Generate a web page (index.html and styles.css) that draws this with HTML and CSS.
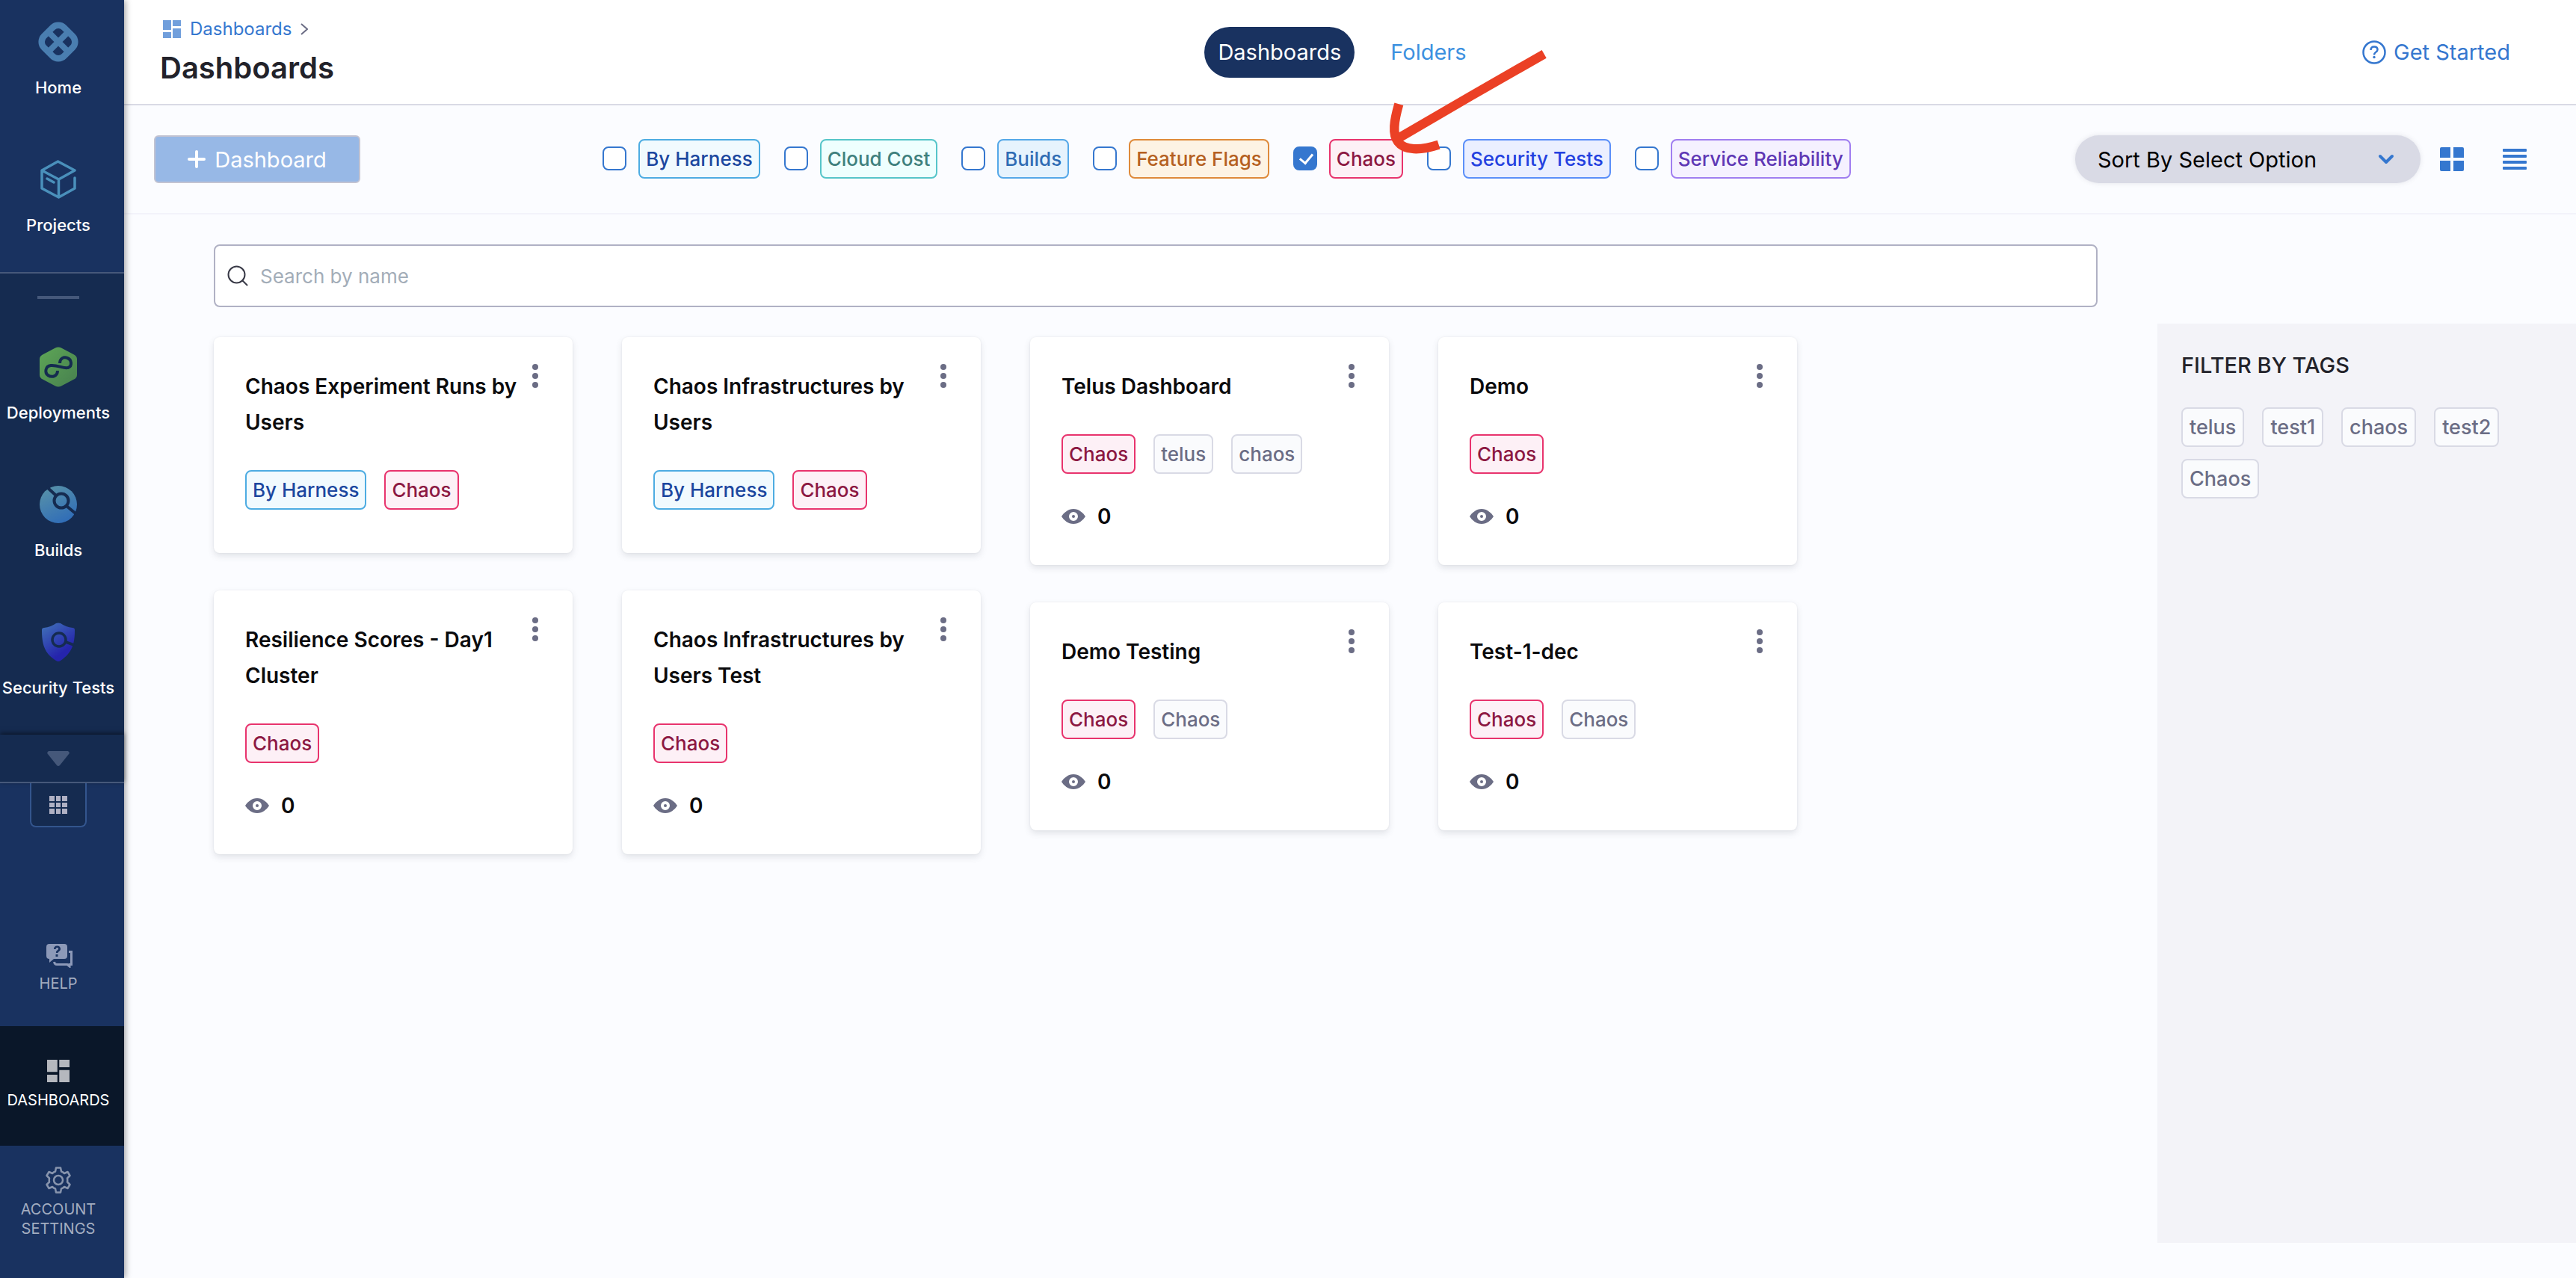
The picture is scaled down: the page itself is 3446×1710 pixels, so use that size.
FILE: index.html
```
<!DOCTYPE html>
<html lang="en">
<head>
<meta charset="utf-8">
<meta name="viewport" content="width=device-width, initial-scale=1">
<title>Dashboards</title>
<link rel="stylesheet" href="styles.css">
</head>
<body>
<svg class="sprite" aria-hidden="true">
  <symbol id="i-dash" viewBox="0 0 24 24"><path d="M0 0h11v13H0zM0 16h11v8H0zM13 0h11v8H13zM13 11h11v13H13z"/></symbol>
  <symbol id="i-dots" viewBox="0 0 8 32"><circle cx="4" cy="4" r="4"/><circle cx="4" cy="16" r="4"/><circle cx="4" cy="28" r="4"/></symbol>
  <symbol id="i-eye" viewBox="0 0 32 20"><path fill-rule="evenodd" d="M16 0C23 0 29 5 32 10C29 15 23 20 16 20S3 15 0 10C3 5 9 0 16 0ZM16 4a6 6 0 1 0 0 12a6 6 0 1 0 0-12Z"/><circle cx="16" cy="10" r="2"/></symbol>
</svg>

<div class="app">
  <nav class="sidebar" aria-label="Main">
    <div class="side-top">
      <a class="module" href="#">
        <span class="module-icon"><svg width="60" height="60" viewBox="0 0 60 60" fill="none" stroke="#4a7eb0"><rect x="11" y="11" width="38" height="38" rx="11" stroke-width="8.500" transform="rotate(45 30 30)"/><path d="M17 17l26 26M43 17L17 43" stroke-width="8"/></svg></span>
        Home
      </a>
      <a class="module" href="#">
        <span class="module-icon"><svg width="48" height="52" viewBox="0 0 48 52" fill="none" stroke="#4a90bb" stroke-width="3.500" stroke-linejoin="round" stroke-linecap="round"><path d="M46 24v14L24.500 50L2 38V14L23.500 2L46 14L24.500 26V50M2 14L24.500 26M9 25l9 5"/></svg></span>
        Projects
      </a>
    </div>
    <div class="side-modules">
      <span class="side-bar"></span>
      <a class="module" href="#">
        <span class="module-icon"><svg width="50" height="54" viewBox="0 0 50 54"><defs><linearGradient id="g1" x1="0" y1="0" x2="1" y2="1"><stop offset="0" stop-color="#5ea656"/><stop offset="1" stop-color="#47804f"/></linearGradient></defs><path fill="url(#g1)" d="M21 1.500q4-2 8 0l17 9q4 2 4 6v21q0 4-4 6l-17 9q-4 2-8 0l-17-9q-4-2-4-6v-21q0-4 4-6z"/><path fill="none" stroke="#152b50" stroke-width="4" d="M27 22C27 15 33 13 37 15C43 17 44 26 38 28C33 30 24 24 15 25C7 26 7 35 11 38C17 42 24 39 24 32"/></svg></span>
        Deployments
      </a>
      <a class="module" href="#">
        <span class="module-icon"><svg width="50" height="50" viewBox="0 0 50 50"><defs><linearGradient id="g2" x1="0.200" y1="0" x2="0.700" y2="1"><stop offset="0" stop-color="#5892a8"/><stop offset="1" stop-color="#2f6cb8"/></linearGradient></defs><circle cx="25" cy="25" r="25" fill="url(#g2)"/><g fill="none" stroke="#152b50" stroke-width="4"><circle cx="29" cy="20" r="9.500"/><path d="M22 13L10 2M36 27l12 10"/></g></svg></span>
        Builds
      </a>
      <a class="module" href="#">
        <span class="module-icon"><svg width="46" height="52" viewBox="0 0 46 52"><defs><linearGradient id="g3" x1="0.100" y1="0" x2="0.700" y2="1"><stop offset="0" stop-color="#4070b8"/><stop offset="0.800" stop-color="#2524ac"/></linearGradient></defs><path fill="url(#g3)" d="M20 1q3-1 6 0q7 5 16 6q3 0 3 3C45 28 42 40 26 51q-3 2-6 0C4 41 1 28 1 10q0-3 3-3q9-1 16-6z"/><g fill="none" stroke="#152b50" stroke-width="3.500"><circle cx="24" cy="23" r="9"/><path d="M33 26l11 4"/></g></svg></span>
        Security Tests
      </a>
    </div>
    <button class="side-more" aria-label="More modules"><svg width="30" height="20" viewBox="0 0 30 20"><path fill="#45587a" d="M2 0h26q3 2 1 4L17 19q-2 2-4 0L1 4q-2-2 1-4z"/></svg></button>
    <button class="side-grid" aria-label="All modules"><svg width="24" height="24" viewBox="0 0 24 24" fill="#b0b1c4"><path d="M0 0h7v7H0zM9 0h6v7H9zM17 0h7v7h-7zM0 9h7v6H0zM9 9h6v6H9zM17 9h7v6h-7zM0 17h7v7H0zM9 17h6v7H9zM17 17h7v7h-7z"/></svg></button>
    <a class="side-link side-help" href="#">
      <span class="side-link-icon"><svg width="36" height="32" viewBox="0 0 36 32" fill="#8c99b8"><path fill-rule="evenodd" d="M4 0h20q4 0 4 4v12q0 4-4 4H10l-6 5v-5q-4 0-4-4V4q0-4 4-4zM10 7h2.500q0-2 2-2q2 0 1.500 2q-.500 1-2 2q-1.500 1-1 3h2.500q0-1 1.500-2q2-1 2-3.500q-.500-4-4.500-4q-4.500 0-4.500 4.500zM12.500 14v3h3v-3z"/><path fill="none" stroke="#8c99b8" stroke-width="3" d="M30 10.500h3.500V27.500H31V30L28 27.500H14q-3 0-3.500-3.500"/></svg></span>
      HELP
    </a>
    <a class="side-link side-current" href="#" aria-current="page">
      <span class="side-link-icon"><svg width="30" height="30" fill="#b5b8be"><use href="#i-dash"/></svg></span>
      DASHBOARDS
    </a>
    <a class="side-link side-account" href="#">
      <span class="side-link-icon"><svg width="34" height="36" viewBox="0 0 34 36" fill="none" stroke="#8794ad" stroke-width="2.500" stroke-linejoin="round"><circle cx="17" cy="18" r="6"/><path d="M14 1.500h6l1 5q2 .500 4 2.500l4.500-2l3 5l-3.500 3.500q.500 2.500 0 5l3.500 3.500l-3 5l-4.500-2q-2 2-4 2.500l-1 5h-6l-1-5q-2-.500-4-2.500l-4.500 2l-3-5L5 20.500q-.500-2.500 0-5L1.500 12l3-5L9 9q2-2 4-2.500z"/></svg></span>
      <span>ACCOUNT<br>SETTINGS</span>
    </a>
  </nav>

  <main class="main">
    <header class="header">
      <div class="heading">
        <div class="crumbs">
          <svg class="crumb-icon" width="24" height="24" fill="#719fdc" aria-hidden="true"><use href="#i-dash"/></svg>
          <a class="crumb" href="#">Dashboards</a>
          <svg width="10" height="16" viewBox="0 0 10 16" fill="none" stroke="#6b6d85" stroke-width="2" aria-hidden="true"><path d="M1 1l8 7l-8 7"/></svg>
        </div>
        <h1 class="title">Dashboards</h1>
      </div>
      <nav class="tabs" aria-label="Views">
        <a class="tab tab-active" href="#">Dashboards</a>
        <a class="tab" href="#">Folders</a>
      </nav>
      <a class="get-started" href="#">
        <svg width="32" height="32" viewBox="0 0 32 32" fill="none" stroke="#3577cf" aria-hidden="true"><circle cx="16" cy="16" r="14.500" stroke-width="2.500"/><path stroke-width="2.500" d="M11.500 13q0-4.500 4.500-4.500t4.500 4q0 2-2.500 3.500q-2 1.200-2 3.500"/><circle cx="16" cy="22.500" r="1.700" fill="#3577cf" stroke="none"/></svg>
        Get Started
      </a>
    </header>

    <div class="toolbar">
      <button class="add"><svg width="24" height="24" viewBox="0 0 24 24" stroke="#fff" stroke-width="4" stroke-linecap="round" aria-hidden="true"><path d="M12 2v20M2 12h20"/></svg>Dashboard</button>
      <div class="filters">
        <label class="filter"><input class="check" type="checkbox"><span class="tag tag-harness">By Harness</span></label>
        <label class="filter"><input class="check" type="checkbox"><span class="tag tag-cost">Cloud Cost</span></label>
        <label class="filter"><input class="check" type="checkbox"><span class="tag tag-builds">Builds</span></label>
        <label class="filter"><input class="check" type="checkbox"><span class="tag tag-flags">Feature Flags</span></label>
        <label class="filter"><input class="check" type="checkbox" checked><span class="tag tag-chaos">Chaos</span>
          <svg class="arrow" width="240" height="170" viewBox="0 0 720 510" fill="none" stroke="#eb4025" stroke-width="37" aria-hidden="true"><path d="M677 64L380 234L95 400"/><path d="M94 265C75 330 66 385 90 416C116 452 180 452 254 428"/></svg>
        </label>
        <label class="filter"><input class="check" type="checkbox"><span class="tag tag-security">Security Tests</span></label>
        <label class="filter"><input class="check" type="checkbox"><span class="tag tag-reliability">Service Reliability</span></label>
      </div>
      <div class="view">
        <div class="sort">
          <select class="sort-select" aria-label="Sort by"><option>Sort By Select Option</option></select>
          <svg class="sort-caret" width="22" height="14" viewBox="0 0 22 14" fill="none" stroke="#3577cf" stroke-width="4" stroke-linecap="round" stroke-linejoin="round" aria-hidden="true"><path d="M3 3l8 8l8-8"/></svg>
        </div>
        <button class="icon-button" aria-label="Grid view"><svg width="32" height="32" viewBox="0 0 32 32" fill="#3577cf"><path d="M2 0h12v14H0V2q0-2 2-2zM18 0h12q2 0 2 2v12H18zM0 18h14v14H2q-2 0-2-2zM18 18h14v12q0 2-2 2H18z"/></svg></button>
        <button class="icon-button" aria-label="List view"><svg width="32" height="28" viewBox="0 0 32 28" fill="#3577cf"><rect width="32" height="4" rx="1"/><rect y="8" width="32" height="4" rx="1"/><rect y="16" width="32" height="4" rx="1"/><rect y="24" width="32" height="4" rx="1"/></svg></button>
      </div>
    </div>

    <div class="body">
      <div class="content">
        <label class="search">
          <svg width="28" height="28" viewBox="0 0 28 28" fill="none" stroke="#383946" stroke-width="2" stroke-linecap="round" aria-hidden="true"><circle cx="12.500" cy="12.500" r="11"/><path d="M20.500 20.500l6 6"/></svg>
          <input class="search-input" type="search" placeholder="Search by name" aria-label="Search by name">
        </label>

        <div class="columns">
          <div class="column">
            <article class="card">
              <div class="card-head"><h2 class="card-title">Chaos Experiment Runs by Users</h2><button class="menu" aria-label="Options"><svg width="8" height="32"><use href="#i-dots"/></svg></button></div>
              <div class="tags"><span class="tag tag-harness">By Harness</span><span class="tag tag-chaos">Chaos</span></div>
            </article>
            <article class="card">
              <div class="card-head"><h2 class="card-title">Resilience Scores - Day1 Cluster</h2><button class="menu" aria-label="Options"><svg width="8" height="32"><use href="#i-dots"/></svg></button></div>
              <div class="tags"><span class="tag tag-chaos">Chaos</span></div>
              <div class="views"><svg width="32" height="20"><use href="#i-eye"/></svg>0</div>
            </article>
          </div>
          <div class="column">
            <article class="card">
              <div class="card-head"><h2 class="card-title">Chaos Infrastructures by Users</h2><button class="menu" aria-label="Options"><svg width="8" height="32"><use href="#i-dots"/></svg></button></div>
              <div class="tags"><span class="tag tag-harness">By Harness</span><span class="tag tag-chaos">Chaos</span></div>
            </article>
            <article class="card">
              <div class="card-head"><h2 class="card-title">Chaos Infrastructures by Users Test</h2><button class="menu" aria-label="Options"><svg width="8" height="32"><use href="#i-dots"/></svg></button></div>
              <div class="tags"><span class="tag tag-chaos">Chaos</span></div>
              <div class="views"><svg width="32" height="20"><use href="#i-eye"/></svg>0</div>
            </article>
          </div>
          <div class="column">
            <article class="card">
              <div class="card-head"><h2 class="card-title">Telus Dashboard</h2><button class="menu" aria-label="Options"><svg width="8" height="32"><use href="#i-dots"/></svg></button></div>
              <div class="tags"><span class="tag tag-chaos">Chaos</span><span class="tag">telus</span><span class="tag">chaos</span></div>
              <div class="views"><svg width="32" height="20"><use href="#i-eye"/></svg>0</div>
            </article>
            <article class="card">
              <div class="card-head"><h2 class="card-title">Demo Testing</h2><button class="menu" aria-label="Options"><svg width="8" height="32"><use href="#i-dots"/></svg></button></div>
              <div class="tags"><span class="tag tag-chaos">Chaos</span><span class="tag">Chaos</span></div>
              <div class="views"><svg width="32" height="20"><use href="#i-eye"/></svg>0</div>
            </article>
          </div>
          <div class="column">
            <article class="card">
              <div class="card-head"><h2 class="card-title">Demo</h2><button class="menu" aria-label="Options"><svg width="8" height="32"><use href="#i-dots"/></svg></button></div>
              <div class="tags"><span class="tag tag-chaos">Chaos</span></div>
              <div class="views"><svg width="32" height="20"><use href="#i-eye"/></svg>0</div>
            </article>
            <article class="card">
              <div class="card-head"><h2 class="card-title">Test-1-dec</h2><button class="menu" aria-label="Options"><svg width="8" height="32"><use href="#i-dots"/></svg></button></div>
              <div class="tags"><span class="tag tag-chaos">Chaos</span><span class="tag">Chaos</span></div>
              <div class="views"><svg width="32" height="20"><use href="#i-eye"/></svg>0</div>
            </article>
          </div>
        </div>
      </div>

      <aside class="panel">
        <h2 class="panel-title">FILTER BY TAGS</h2>
        <div class="panel-tags"><button class="tag panel-tag">telus</button><button class="tag panel-tag">test1</button><button class="tag panel-tag">chaos</button><button class="tag panel-tag">test2</button><button class="tag panel-tag">Chaos</button></div>
      </aside>
    </div>
  </main>
</div>
</body>
</html>
```
FILE: styles.css
```
* {
  box-sizing: border-box;
}

body {
  margin: 0;
  font-family: Inter, "Liberation Sans", sans-serif;
  font-size: 28px;
  color: #0b0b0d;
  background: #fbfcff;
}

a {
  text-decoration: none;
}

button {
  font: inherit;
  padding: 0;
  border: 0;
  background: none;
}

h1,
h2 {
  margin: 0;
}

svg {
  flex: none;
}

.sprite {
  position: absolute;
  width: 0;
  height: 0;
}

.app {
  display: flex;
  min-height: 100vh;
}

/* Sidebar */

.sidebar {
  position: relative;
  z-index: 1;
  display: flex;
  flex: none;
  flex-direction: column;
  width: 166px;
  background: #193260;
  box-shadow: 2px 0 8px rgba(0, 0, 0, 0.35);
}

.side-top,
.side-modules {
  display: flex;
  flex-direction: column;
  gap: 4px;
}

.side-top {
  border-bottom: 2px solid #46587a;
}

.side-modules {
  background: #152b50;
}

.side-bar {
  width: 56px;
  height: 4px;
  margin: 30px 0 31px 50px;
  background: #45587a;
}

.module {
  display: flex;
  flex-direction: column;
  align-items: center;
  gap: 18px;
  padding: 26px 10px 50px 0;
  font-size: 22px;
  font-weight: 500;
  line-height: 26px;
  white-space: nowrap;
  color: #fff;
}

.module-icon {
  display: flex;
  align-items: center;
  height: 60px;
}

.side-more {
  display: flex;
  align-items: center;
  justify-content: center;
  height: 65px;
  padding-right: 10px;
  background: #152b50;
  border-bottom: 2px solid #46587a;
  box-shadow: 0 -2px 6px rgba(0, 0, 0, 0.5);
}

.side-grid {
  display: flex;
  align-items: center;
  justify-content: center;
  width: 76px;
  height: 59px;
  margin-left: 40px;
  background: #152b50;
  border: 2px solid #33558d;
  border-top: 0;
  border-radius: 0 0 8px 8px;
}

.side-link {
  display: flex;
  flex-direction: column;
  align-items: center;
  gap: 8px;
  height: 160px;
  padding-right: 10px;
  font-size: 20px;
  line-height: 26px;
  text-align: center;
  color: #a3adc0;
}

.side-link-icon {
  display: flex;
  align-items: center;
  height: 36px;
}

.side-help {
  gap: 6px;
  margin-top: auto;
  padding-top: 48px;
}

.side-help .side-link-icon {
  padding-left: 4px;
}

.side-current {
  padding-top: 42px;
  color: #fff;
  background: #0a1729;
}

.side-account {
  height: 177px;
  padding-top: 28px;
}

/* Header */

.main {
  display: flex;
  flex: 1;
  flex-direction: column;
  min-width: 0;
}

.header {
  display: flex;
  align-items: center;
  justify-content: space-between;
  height: 141px;
  padding: 0 88px 0 48px;
  background: #fff;
  border-bottom: 2px solid #d9dae5;
}

.crumbs {
  display: flex;
  align-items: center;
  gap: 12px;
  height: 30px;
  padding-left: 4px;
}

.crumb {
  font-size: 24px;
  line-height: 30px;
  color: #3577cf;
}

.title {
  margin-top: 13px;
  font-size: 40px;
  font-weight: 600;
  line-height: 48px;
  color: #22222a;
}

.tabs {
  display: flex;
  gap: 30px;
  padding-right: 16px;
}

.tab {
  padding: 16px 18px;
  border-radius: 34px;
  font-size: 29px;
  line-height: 36px;
  color: #3d91e0;
}

.tab-active {
  color: #fff;
  background: #193260;
}

.get-started {
  display: flex;
  align-items: center;
  gap: 10px;
  font-size: 29px;
  color: #3577cf;
}

/* Toolbar */

.toolbar {
  display: flex;
  align-items: center;
  justify-content: space-between;
  height: 146px;
  padding: 0 66px 0 40px;
  border-bottom: 2px solid #f3f3fa;
}

.add {
  display: flex;
  align-items: center;
  justify-content: center;
  gap: 12px;
  width: 276px;
  height: 64px;
  font-size: 29px;
  color: #fff;
  background: #97b8e6;
  border: 2px solid #c2c3d2;
  border-radius: 6px;
}

.filters {
  display: flex;
  gap: 32px;
  padding: 0 0 2px 24px;
}

.filter {
  position: relative;
  display: flex;
  align-items: center;
  gap: 16px;
}

.check {
  position: relative;
  width: 32px;
  height: 32px;
  margin: 0;
  appearance: none;
  background: #fff;
  border: 2px solid #3577cf;
  border-radius: 8px;
}

.check:checked {
  background: #3577cf;
}

.check:checked::after {
  content: "";
  position: absolute;
  top: 4px;
  left: 10px;
  width: 8px;
  height: 14px;
  border: solid #fff;
  border-width: 0 3px 3px 0;
  transform: rotate(40deg);
}

.arrow {
  position: absolute;
  z-index: 1;
  top: -135px;
  left: 110px;
  pointer-events: none;
}

.view {
  display: flex;
  align-items: center;
}

.sort {
  position: relative;
  width: 462px;
}

.sort-select {
  width: 100%;
  height: 64px;
  padding: 0 60px 0 30px;
  appearance: none;
  font-family: inherit;
  font-size: 29px;
  color: #000;
  background: #d9dae5;
  border: 0;
  border-radius: 32px;
  box-shadow: 0 0 6px rgba(96, 97, 112, 0.15);
}

.sort-caret {
  position: absolute;
  top: 25px;
  right: 35px;
  pointer-events: none;
}

.icon-button {
  display: flex;
  margin-left: 26px;
}

.icon-button + .icon-button {
  margin-left: 52px;
}

/* Tags */

.tag {
  padding: 0 8px;
  border: 2px solid #d9dae5;
  border-radius: 8px;
  font-size: 26px;
  font-weight: 500;
  line-height: 49px;
  white-space: nowrap;
  color: #6b6d85;
  background: #fafbfd;
}

.tag-harness {
  color: #1c479f;
  background: #f1fafe;
  border-color: #4dace2;
}

.tag-cost {
  color: #3f807d;
  background: #eefffe;
  border-color: #56c5c9;
}

.tag-builds {
  color: #2f6cb4;
  background: #e6f3fd;
  border-color: #55a8e8;
}

.tag-flags {
  color: #b5601f;
  background: #fdf3e4;
  border-color: #df8a3a;
}

.tag-chaos {
  color: #8c1842;
  background: #fdf0f6;
  border-color: #e8336d;
}

.tag-security {
  color: #2441e0;
  background: #ebefff;
  border-color: #5b8ff9;
}

.tag-reliability {
  color: #5f38b5;
  background: #f5f1ff;
  border-color: #a07ef0;
}

/* Body */

.body {
  display: grid;
  flex: 1;
  grid-template-columns: minmax(0, 1fr) 560px;
}

.content {
  padding: 40px 80px 40px 120px;
}

.search {
  display: flex;
  align-items: center;
  gap: 16px;
  height: 84px;
  padding: 0 16px;
  background: #fff;
  border: 2px solid #b0b1c4;
  border-radius: 8px;
}

.search-input {
  flex: 1;
  height: 60px;
  padding: 0;
  border: 0;
  outline: 0;
  font-family: inherit;
  font-size: 26px;
  background: none;
}

.search-input::placeholder {
  color: #a3adb8;
  opacity: 1;
}

.columns {
  display: grid;
  grid-template-columns: repeat(4, minmax(0, 480px));
  gap: 66px;
  margin-top: 40px;
}

.column {
  display: flex;
  flex-direction: column;
  gap: 50px;
}

.card {
  padding: 36px 34px 48px 42px;
  background: #fff;
  border-radius: 8px;
  box-shadow: 0 4px 8px rgba(96, 97, 112, 0.16), 0 0 2px rgba(40, 41, 61, 0.08);
}

.card-head {
  display: flex;
  align-items: flex-start;
}

.card-title {
  flex: 1;
  padding-top: 6px;
  font-size: 28px;
  font-weight: 600;
  line-height: 48px;
}

.menu {
  display: flex;
  justify-content: center;
  width: 32px;
  fill: #6b6d85;
}

.tags {
  display: flex;
  flex-wrap: wrap;
  gap: 16px 24px;
  margin-top: 40px;
  padding-bottom: 10px;
}

.views {
  display: flex;
  align-items: center;
  gap: 16px;
  margin-top: 30px;
  font-weight: 600;
  line-height: 34px;
}

.views svg {
  fill: #6b6d85;
}

.panel {
  margin: 146px 0 47px;
  padding: 36px 32px;
  background: #f3f3f8;
}

.panel-title {
  font-size: 29px;
  font-weight: 500;
  line-height: 40px;
  color: #22222a;
}

.panel-tags {
  display: flex;
  flex-wrap: wrap;
  gap: 16px 24px;
  margin-top: 36px;
}

.panel-tag {
  padding: 0 9px;
  font-size: 27px;
}
```
